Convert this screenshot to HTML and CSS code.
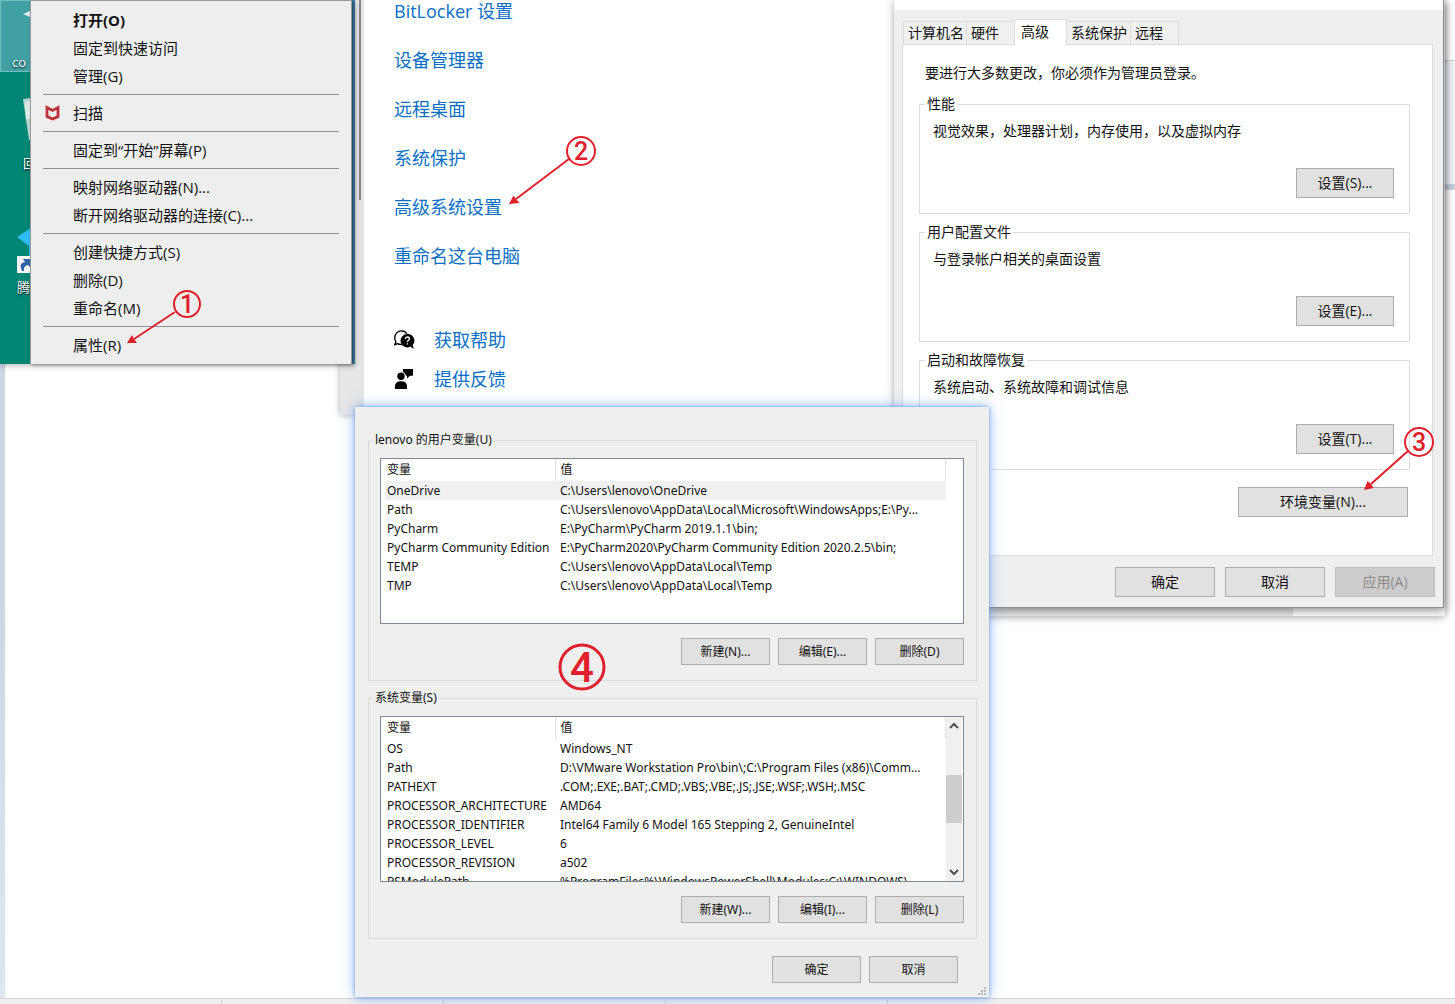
FILE: index.html
```html
<!DOCTYPE html>
<html lang="zh-CN">
<head>
    <meta charset="UTF-8">
    <title>配置环境变量</title>
    <link rel="stylesheet" href="styles.css">
</head>
<body>
    <main class="screen">
        <div class="back-edge"></div>
        <div class="back-right"></div>
        <div class="statusbar"><span></span><span></span><span></span><span></span></div>
        <div class="back-window"></div>

        <!-- settings page -->
        <section class="settings">
            <div class="settings-side"></div>
            <div class="settings-body">
                <nav class="links">
                    <a href="#">BitLocker 设置</a>
                    <a href="#">设备管理器</a>
                    <a href="#">远程桌面</a>
                    <a href="#">系统保护</a>
                    <a href="#">高级系统设置</a>
                    <a href="#">重命名这台电脑</a>
                </nav>
                <nav class="help">
                    <a href="#">
                        <svg width="21" height="20" viewBox="0 0 21 20">
                            <path d="M8 14.4 Q5 14.6 3.6 13.6 L0.7 14.8 L1.9 11.8 Q0.7 10 0.7 7.8 C0.7 3.8 3.6 0.9 7.4 0.9 C10 0.9 12 2.2 13 4" fill="none" stroke="#000" stroke-width="1.3"/>
                            <path d="M13.5 4 A6.7 6.7 0 1 0 16.4 16.6 L19.8 19 L18.8 15 A6.7 6.7 0 0 0 13.5 4Z" fill="#000"/>
                            <path d="M11.4 8.9 Q11.5 7 13.4 7 Q15.4 7 15.4 8.7 Q15.4 9.8 14.2 10.5 Q13.4 11 13.4 12.1 M13.4 13.2 V14.6" fill="none" stroke="#fff" stroke-width="1.3"/>
                        </svg>
                        <span>获取帮助</span>
                    </a>
                    <a href="#">
                        <svg width="21" height="20" viewBox="0 0 21 20">
                            <path d="M9 0 H19 V6.8 H16 L13 9.6 V6.8 H12 A5 5 0 0 0 9 3Z" fill="#000"/>
                            <circle cx="7" cy="7.3" r="3.7" fill="#000"/>
                            <path d="M1 20 V17 Q1 12.2 7 12.2 Q13 12.2 13 17 V20Z" fill="#000"/>
                        </svg>
                        <span>提供反馈</span>
                    </a>
                </nav>
            </div>
            <svg class="mark mark-2" width="90" height="72" viewBox="0 0 90 72">
                <circle cx="73" cy="17" r="14"/>
                <text x="73" y="26">2</text>
                <path class="line" d="M61 25 L8 65"/>
                <path class="tip" d="M1 70 L5.5 61.5 L8 65 L11.5 69Z"/>
            </svg>
        </section>

        <!-- desktop and context menu -->
        <section class="desktop">
            <div class="tile selected">
                <svg width="10" height="8" viewBox="0 0 10 8"><path d="M1 4 L10 0 V8Z" fill="#dfe9ee"/></svg>
                <span>co</span>
            </div>
            <div class="tile bin">
                <svg width="8" height="42" viewBox="0 0 8 42"><path d="M0 1 L8 0 V42 H6Z" fill="#b8d4d0"/><path d="M2 4 L8 3 V20 L3 22Z" fill="#dcebe8"/></svg>
                <span>回</span>
            </div>
            <div class="tile video">
                <svg width="14" height="46" viewBox="0 0 14 46">
                    <path d="M0 9 L14 0 V28 H12 V18Z" fill="#30bdf5"/>
                    <rect y="28" width="14" height="17" fill="#f4f6f8"/>
                    <path d="M5 43 Q1 35 8 34 L6 31 H14 V40 L11 37 Q6 38 7 43Z" fill="#2f62a5"/>
                </svg>
                <span>腾</span>
            </div>
        </section>
        <div class="menu">
            <button class="bold">打开(O)</button>
            <button>固定到快速访问</button>
            <button>管理(G)</button>
            <hr>
            <button>
                <svg class="shield" width="15" height="16" viewBox="0 0 15 16"><path d="M2 2.6 L7.5 5.4 L13 2.6 V11.6 L7.5 14 L2 11.6Z" fill="none" stroke="#bf2f38" stroke-width="2.8"/></svg>
                扫描
            </button>
            <hr>
            <button>固定到“开始”屏幕(P)</button>
            <hr>
            <button>映射网络驱动器(N)...</button>
            <button>断开网络驱动器的连接(C)...</button>
            <hr>
            <button>创建快捷方式(S)</button>
            <button>删除(D)</button>
            <button>重命名(M)</button>
            <hr>
            <button>属性(R)</button>
            <svg class="mark mark-1" width="76" height="56" viewBox="0 0 76 56">
                <circle cx="61" cy="15" r="13"/>
                <text x="61" y="24">1</text>
                <path class="line" d="M49 23 L8 50"/>
                <path class="tip" d="M1 54 L6 46 L8 50 L11 54Z"/>
            </svg>
        </div>

        <!-- system properties -->
        <section class="window sysprops">
            <div class="titlebar"></div>
            <div class="tabs">
                <button>计算机名</button>
                <button>硬件</button>
                <button class="active">高级</button>
                <button>系统保护</button>
                <button>远程</button>
            </div>
            <div class="panel">
                <p>要进行大多数更改，你必须作为管理员登录。</p>
                <fieldset>
                    <legend>性能</legend>
                    <p>视觉效果，处理器计划，内存使用，以及虚拟内存</p>
                    <button class="btn">设置(S)...</button>
                </fieldset>
                <fieldset>
                    <legend>用户配置文件</legend>
                    <p>与登录帐户相关的桌面设置</p>
                    <button class="btn">设置(E)...</button>
                </fieldset>
                <fieldset>
                    <legend>启动和故障恢复</legend>
                    <p>系统启动、系统故障和调试信息</p>
                    <button class="btn">设置(T)...</button>
                </fieldset>
                <button class="btn env-btn">环境变量(N)...</button>
            </div>
            <div class="actions">
                <button class="btn">确定</button>
                <button class="btn">取消</button>
                <button class="btn" disabled>应用(A)</button>
            </div>
            <svg class="mark mark-3" width="72" height="64" viewBox="0 0 72 64">
                <circle cx="56" cy="15" r="14"/>
                <text x="56" y="24">3</text>
                <path class="line" d="M45 24 L8 57"/>
                <path class="tip" d="M1 63 L4.5 54 L8 57 L10.5 61Z"/>
            </svg>
        </section>

        <!-- environment variables -->
        <section class="window envvars">
            <fieldset>
                <legend>lenovo 的用户变量(U)</legend>
                <div class="list">
                    <table>
                        <thead>
                            <tr><th class="name">变量</th><th>值</th></tr>
                        </thead>
                        <tbody>
                            <tr class="selected"><td>OneDrive</td><td>C:\Users\lenovo\OneDrive</td></tr>
                            <tr><td>Path</td><td>C:\Users\lenovo\AppData\Local\Microsoft\WindowsApps;E:\Py...</td></tr>
                            <tr><td>PyCharm</td><td>E:\PyCharm\PyCharm 2019.1.1\bin;</td></tr>
                            <tr><td>PyCharm Community Edition</td><td>E:\PyCharm2020\PyCharm Community Edition 2020.2.5\bin;</td></tr>
                            <tr><td>TEMP</td><td>C:\Users\lenovo\AppData\Local\Temp</td></tr>
                            <tr><td>TMP</td><td>C:\Users\lenovo\AppData\Local\Temp</td></tr>
                        </tbody>
                    </table>
                </div>
                <div class="actions">
                    <button class="btn">新建(N)...</button>
                    <button class="btn">编辑(E)...</button>
                    <button class="btn">删除(D)</button>
                </div>
            </fieldset>
            <fieldset>
                <legend>系统变量(S)</legend>
                <div class="list">
                    <table>
                        <thead>
                            <tr><th class="name">变量</th><th>值</th></tr>
                        </thead>
                        <tbody>
                            <tr><td>OS</td><td>Windows_NT</td></tr>
                            <tr><td>Path</td><td>D:\VMware Workstation Pro\bin\;C:\Program Files (x86)\Comm...</td></tr>
                            <tr><td>PATHEXT</td><td>.COM;.EXE;.BAT;.CMD;.VBS;.VBE;.JS;.JSE;.WSF;.WSH;.MSC</td></tr>
                            <tr><td>PROCESSOR_ARCHITECTURE</td><td>AMD64</td></tr>
                            <tr><td>PROCESSOR_IDENTIFIER</td><td>Intel64 Family 6 Model 165 Stepping 2, GenuineIntel</td></tr>
                            <tr><td>PROCESSOR_LEVEL</td><td>6</td></tr>
                            <tr><td>PROCESSOR_REVISION</td><td>a502</td></tr>
                            <tr><td>PSModulePath</td><td>%ProgramFiles%\WindowsPowerShell\Modules;C:\WINDOWS\...</td></tr>
                        </tbody>
                    </table>
                    <div class="scrollbar">
                        <svg width="16" height="17" viewBox="0 0 16 17"><path d="M4 11 L8 7 L12 11"/></svg>
                        <div class="track"><div class="thumb"></div></div>
                        <svg width="16" height="17" viewBox="0 0 16 17"><path d="M4 6 L8 10 L12 6"/></svg>
                    </div>
                </div>
                <div class="actions">
                    <button class="btn">新建(W)...</button>
                    <button class="btn">编辑(I)...</button>
                    <button class="btn">删除(L)</button>
                </div>
            </fieldset>
            <div class="actions bottom">
                <button class="btn">确定</button>
                <button class="btn">取消</button>
            </div>
            <svg class="grip" width="9" height="9" viewBox="0 0 9 9"><path d="M6 0h2v2h-2zM3 3h2v2h-2zM6 3h2v2h-2zM0 6h2v2h-2zM3 6h2v2h-2zM6 6h2v2h-2z" fill="#b8b8b8"/></svg>
            <svg class="mark mark-4" width="48" height="48" viewBox="0 0 48 48">
                <circle cx="24" cy="24" r="22"/>
                <text x="24" y="39">4</text>
            </svg>
        </section>
    </main>
</body>
</html>
```
FILE: styles.css
```css
* {
    box-sizing: border-box;
}

body {
    margin: 0;
    background: #fff;
    color: #111;
    font-family: "Open Sans", "Noto Sans CJK SC", sans-serif;
}

button {
    font-family: inherit;
    color: inherit;
    white-space: nowrap;
}

p {
    margin: 0;
}

.screen {
    position: relative;
    height: 100vh;
    min-height: 1004px;
    overflow: hidden;
}

/* things behind the windows */
.back-edge {
    position: absolute;
    left: 0;
    top: 0;
    bottom: 6px;
    width: 5px;
    background: linear-gradient(#ccd5e6 60%, #dfe7f2);
}

.back-right {
    position: absolute;
    right: 0;
    top: 60px;
    width: 12px;
    height: 130px;
    background: #f0f2f6;
    border-top: 1px solid #c8ced6;
    border-bottom: 6px solid #c5cfe0;
}

.statusbar {
    position: absolute;
    left: 0;
    right: 0;
    bottom: 0;
    height: 6px;
    display: flex;
    background: #f0f0f0;
    border-top: 1px solid #d2d2d2;
}

.statusbar span {
    width: 222px;
    margin-top: 1px;
    border-right: 1px solid #d0d0d0;
}

.back-window {
    position: absolute;
    left: 894px;
    right: 10px;
    top: 0;
    height: 616px;
    background: linear-gradient(90deg, #e2e2e2 399px, #fafafa 399px);
    box-shadow: 0 1px 8px rgba(0, 0, 0, 0.35);
}

/* settings page */
.settings {
    position: absolute;
    left: 340px;
    top: 0;
    width: 554px;
    height: 415px;
    display: flex;
    box-shadow: 0 0 6px rgba(0, 0, 0, 0.35);
}

.settings-side {
    width: 24px;
    background: #e6e6e6;
}

.settings-side::after {
    content: "";
    display: block;
    width: 2px;
    height: 200px;
    margin-left: 19px;
    background: #8a8a8a;
}

.settings-body {
    flex: 1;
    padding-left: 30px;
    background: #fff;
    font-size: 18px;
    line-height: 24px;
}

.settings-body a {
    color: #0a6fc4;
    text-decoration: none;
}

.links {
    display: flex;
    flex-direction: column;
    align-items: flex-start;
    gap: 25px;
    margin-top: -1px;
}

.help {
    display: flex;
    flex-direction: column;
    gap: 15px;
    margin-top: 60px;
}

.help a {
    display: flex;
    align-items: center;
    gap: 19px;
}

/* desktop */
.desktop {
    position: absolute;
    left: 0;
    top: 0;
    width: 355px;
    height: 364px;
    background: linear-gradient(90deg, #008675 200px, #3a7ea6 200px);
    box-shadow: 0 2px 6px rgba(0, 0, 0, 0.25);
    color: #fff;
    font-size: 13px;
    line-height: 18px;
    text-shadow: 0 1px 2px #000;
}

.tile {
    display: flex;
    flex-direction: column;
    width: 60px;
}

.tile.selected {
    height: 72px;
    padding: 9px 0 0 11px;
    justify-content: space-between;
    background: #40a0a4;
    border: 1px solid #75bcbe;
}

.tile.selected svg {
    margin-left: 10px;
}

.bin {
    padding: 26px 0 0 23px;
    gap: 14px;
}

.video {
    padding: 56px 0 0 17px;
    gap: 4px;
}

/* context menu */
.menu {
    position: absolute;
    left: 30px;
    top: 0;
    width: 322px;
    padding: 5px 0;
    background: #eee;
    border: 1px solid #999;
    border-bottom: 0;
    box-shadow: 2px 1px 3px rgba(0, 0, 0, 0.4);
}

.menu button {
    display: flex;
    align-items: center;
    width: 100%;
    height: 28px;
    padding: 0 0 1px 42px;
    border: 0;
    background: none;
    font-size: 15px;
    line-height: 26px;
}

.menu .bold {
    font-weight: bold;
}

.menu hr {
    height: 1px;
    margin: 4px 12px;
    border: 0;
    background: #919191;
}

.menu .shield {
    margin: 0 13px 0 -28px;
}

/* shared window parts */
.window {
    position: absolute;
    background: #efefef;
}

.window fieldset {
    min-width: 0;
    margin: 0;
    border: 1px solid #dcdcdc;
}

.btn {
    padding: 0 0 2px;
    background: #e1e1e1;
    border: 1px solid #adadad;
    font-size: inherit;
}

.btn:disabled {
    background: #ccc;
    border-color: #bfbfbf;
    color: #8a8a8a;
}

.actions {
    display: flex;
    justify-content: flex-end;
}

/* system properties */
.sysprops {
    left: 894px;
    right: 11px;
    top: 0;
    padding: 0 10px 10px 8px;
    border-right: 1px solid #8c8c8c;
    border-bottom: 1px solid #8c8c8c;
    box-shadow: 1px 2px 8px rgba(0, 0, 0, 0.45);
    font-size: 14px;
    line-height: 20px;
}

.titlebar {
    height: 10px;
    margin: 0 -10px 0 -8px;
    background: #fff;
}

.tabs {
    display: flex;
    align-items: flex-end;
    height: 35px;
    padding-left: 1px;
}

.tabs button {
    height: 24px;
    padding: 0 4px;
    background: #f0f0f0;
    border: 1px solid #dcdcdc;
    border-left-width: 0;
    font-size: 14px;
    line-height: 20px;
    text-align: left;
    width: 48px;
}

.tabs button:first-child,
.tabs button:nth-child(4) {
    width: 64px;
}

.tabs button:first-child {
    border-left-width: 1px;
}

.tabs .active {
    position: relative;
    width: 52px;
    height: 26px;
    padding: 0 6px 2px;
    background: #fff;
    border-bottom: 0;
}

.panel {
    display: flex;
    flex-direction: column;
    margin-top: -1px;
    padding: 18px 22px 38px 16px;
    background: #fff;
    border: 1px solid #dcdcdc;
}

.panel > p {
    margin: 0 0 11px 6px;
}

.panel fieldset {
    display: flex;
    flex-direction: column;
    margin-bottom: 8px;
    padding: 7px 15px 15px 13px;
}

.panel legend {
    margin-left: -8px;
    padding: 0 2px;
}

.panel .btn {
    align-self: flex-end;
    width: 98px;
    height: 30px;
    margin-top: 27px;
}

.panel .env-btn {
    width: 170px;
    margin: 9px 2px 0 0;
}

.sysprops .actions {
    gap: 10px;
    margin: 11px -2px 0 0;
}

.sysprops .actions .btn {
    width: 100px;
    height: 30px;
}

/* environment variables */
.envvars {
    left: 355px;
    top: 407px;
    width: 634px;
    padding: 25px 12px 14px 13px;
    box-shadow: 0 0 3px #6fa3e8, 0 0 12px rgba(80, 150, 245, 0.7);
    font-family: "Noto Sans", "Noto Sans CJK SC", sans-serif;
    font-size: 12px;
    line-height: 16px;
}

.envvars fieldset {
    margin-bottom: 9px;
    padding: 10px 12px 15px 11px;
}

.envvars legend {
    margin-left: -7px;
    padding: 0 2px;
}

.list {
    display: flex;
    height: 166px;
    margin-bottom: 14px;
    overflow: hidden;
    background: #fff;
    border: 1px solid #828790;
}

.list table {
    width: 561px;
    margin-left: 4px;
    align-self: flex-start;
    border-collapse: collapse;
    table-layout: fixed;
}

.list th,
.list td {
    height: 19px;
    padding: 0 0 0 5px;
    line-height: 18px;
    font-weight: normal;
    text-align: left;
    white-space: nowrap;
}

.list th {
    height: 22px;
    border-right: 1px solid #e2e2e2;
}

.list th.name {
    width: 170px;
}

.list th:first-child,
.list td:first-child {
    padding-left: 2px;
}

.list .selected {
    background: #f0f0f0;
}

.scrollbar {
    display: flex;
    flex-direction: column;
    width: 16px;
    background: #f0f0f0;
}

.scrollbar path {
    fill: none;
    stroke: #505050;
    stroke-width: 2;
}

.track {
    flex: 1;
    padding-top: 41px;
}

.thumb {
    height: 48px;
    background: #cdcdcd;
}

.envvars .actions {
    gap: 8px;
}

.envvars .btn {
    width: 89px;
    height: 27px;
}

.envvars .bottom {
    margin-top: 17px;
    padding-right: 19px;
}

.grip {
    position: absolute;
    right: 2px;
    bottom: 1px;
}

/* numbered step marks */
.mark {
    position: absolute;
}

.mark circle {
    fill: none;
    stroke: #e0202a;
    stroke-width: 2;
}

.mark text {
    fill: #e0202a;
    font-family: Roboto, "Liberation Sans", sans-serif;
    font-size: 25px;
    font-weight: 500;
    text-anchor: middle;
}

.mark .line {
    stroke: #e0202a;
    stroke-width: 2;
}

.mark .tip {
    fill: #e0202a;
}

.mark-1 {
    left: 95px;
    top: 288px;
}

.mark-2 {
    left: 168px;
    top: 134px;
}

.mark-3 {
    right: 8px;
    top: 427px;
}

.mark-4 {
    left: 203px;
    top: 236px;
}

.mark-4 circle {
    stroke-width: 3;
}

.mark-4 text {
    font-size: 42px;
}
```
